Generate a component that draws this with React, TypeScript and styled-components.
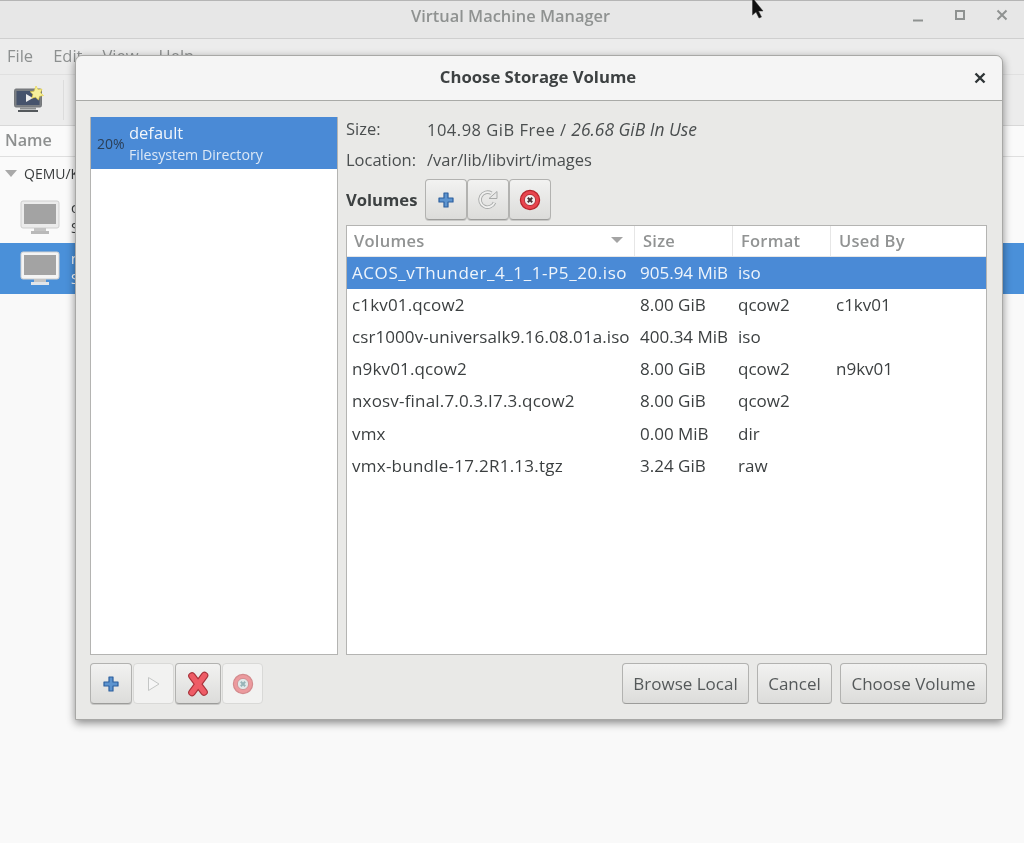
import React from "react";
import styled, { createGlobalStyle } from "styled-components";

const Global = createGlobalStyle`
  html, body { margin: 0; padding: 0; background: #f9f9f9; }
  body { font-family: "Open Sans", "Noto Sans", sans-serif; font-size: 16.5px; color: #2e3436; }
  * { box-sizing: border-box; }
`;

const Page = styled.div`
  position: relative;
  width: 1024px;
  height: 843px;
  overflow: hidden;
  background: #f9f9f9;
  filter: blur(0.55px);
`;

const TitleBar = styled.div`
  height: 39px;
  position: relative;
  display: flex;
  align-items: center;
  justify-content: center;
  padding: 0 3px 9px 0;
  background: #e7e7e7;
  border-top: 1px solid #b5b5b5;
  border-bottom: 1px solid #cfcfcf;
  color: #8f9291;
  font-weight: 600;
  font-size: 16.4px;
`;

const WindowControls = styled.div`
  position: absolute;
  right: 15px;
  top: 7px;
  display: flex;
  gap: 28px;
  align-items: center;
`;

const MenuBar = styled.div`
  height: 35px;
  display: flex;
  align-items: center;
  gap: 20px;
  padding: 0 7px 2px;
  background: #ececec;
  color: #8d9090;
  font-size: 16.5px;
`;

const ToolBar = styled.div`
  height: 51px;
  display: flex;
  align-items: center;
  padding-left: 13px;
  gap: 18px;
  background: #ececec;
  border-top: 1px solid #e0e0e0;
`;

const ToolSep = styled.div`
  width: 1px;
  height: 40px;
  background: #dcdcdc;
`;

const ListHeader = styled.div`
  height: 32px;
  display: flex;
  align-items: center;
  padding: 0 0 3px 5px;
  background: #fafafa;
  border-top: 1px solid #d8d8d8;
  border-bottom: 1px solid #dfdfdf;
  color: #8d8f8f;
  font-weight: 600;
  font-size: 16.2px;
`;

const GroupRow = styled.div`
  height: 35px;
  display: flex;
  align-items: center;
  gap: 7px;
  padding: 0 0 2px 5px;
  background: #fafafa;
  color: #3a3d3e;
  font-size: 14px;
`;

const Tri = styled.div`
  width: 0;
  height: 0;
  border-left: 6px solid transparent;
  border-right: 6px solid transparent;
  border-top: 7px solid #a9a9a9;
`;

const VmRow = styled.div<{ $selected?: boolean }>`
  height: 51px;
  display: flex;
  align-items: center;
  padding-left: 20px;
  gap: 11px;
  background: ${(p) => (p.$selected ? "#4a90d9" : "#fafafa")};
  color: ${(p) => (p.$selected ? "#fff" : "#3a3d3e")};
`;

const VmText = styled.div`
  display: flex;
  flex-direction: column;
  font-size: 14px;
  line-height: 20px;
`;

const Dialog = styled.div`
  position: absolute;
  left: 75px;
  top: 55px;
  width: 928px;
  height: 665px;
  display: flex;
  flex-direction: column;
  background: #e9e9e7;
  border: 1px solid #a8a8a6;
  border-radius: 7px 7px 0 0;
  box-shadow: 0 3px 9px rgba(0, 0, 0, 0.45);
`;

const DialogHead = styled.div`
  height: 45px;
  flex: none;
  position: relative;
  display: flex;
  align-items: center;
  justify-content: center;
  background: #f5f5f5;
  border-bottom: 1px solid #a9aaa7;
  border-radius: 7px 7px 0 0;
  font-weight: 700;
  font-size: 16.7px;
  color: #3d4142;
  padding: 0 2px 3px 0;
`;

const CloseBtn = styled.div`
  position: absolute;
  right: 16px;
  top: 16px;
  line-height: 0;
`;

const DialogBody = styled.div`
  flex: 1;
  display: flex;
  flex-direction: column;
  padding: 16px 15px 15px 14px;
  gap: 8px;
  min-height: 0;
`;

const Split = styled.div`
  flex: 1;
  display: flex;
  gap: 8px;
  min-height: 0;
`;

const PoolList = styled.div`
  width: 248px;
  flex: none;
  background: #fff;
  border: 1px solid #b4b4b2;
`;

const PoolRow = styled.div`
  height: 52px;
  margin: -1px 0 0;
  position: relative;
  background: #4a8ad6;
  display: flex;
  flex-direction: column;
  padding: 5px 0 0 38px;
  color: #f2f6fb;
`;

const PoolPct = styled.span`
  position: absolute;
  left: 6px;
  top: 17px;
  font-size: 14px;
  color: #2b3f57;
`;

const PoolName = styled.span`
  font-size: 16.5px;
  line-height: 22px;
`;

const PoolType = styled.span`
  font-size: 14.2px;
  line-height: 20px;
  color: #dce8f6;
  padding-top: 1px;
`;

const Right = styled.div`
  flex: 1;
  min-width: 0;
  display: flex;
  flex-direction: column;
`;

const InfoList = styled.div`
  margin-top: -4px;
`;

const InfoRow = styled.div`
  height: 31px;
  display: flex;
  align-items: center;
  color: #4a4e4f;
  font-size: 16.5px;
`;

const InfoLabel = styled.span<{ $w: number }>`
  width: ${(p) => p.$w}px;
  flex: none;
`;

const FreeText = styled.span`
  letter-spacing: 0.5px;
`;

const InUse = styled.em`
  font-size: 17.4px;
  letter-spacing: 0;
`;

const VolumesBar = styled.div`
  display: flex;
  align-items: center;
  height: 41px;
  margin-top: 4px;
`;

const VolumesLabel = styled.span`
  font-weight: 700;
  color: #3d4142;
  font-size: 16.6px;
  width: 79px;
`;

const IconBtn = styled.div<{ $disabled?: boolean; $w?: number }>`
  width: ${(p) => p.$w ?? 42}px;
  height: 41px;
  flex: none;
  display: flex;
  align-items: center;
  justify-content: center;
  border-radius: 4px;
  border: 1px solid ${(p) => (p.$disabled ? "#d9d9d7" : "#b2b2b0")};
  border-bottom-color: ${(p) => (p.$disabled ? "#d9d9d7" : "#9c9c9a")};
  background: ${(p) =>
    p.$disabled ? "#f2f2f1" : "linear-gradient(#f2f2f1, #dcdcda)"};
  box-shadow: ${(p) => (p.$disabled ? "none" : "0 1px 0 #c8c8c6")};
`;

const Table = styled.div`
  margin-top: 5px;
  flex: 1;
  min-height: 0;
  background: #fff;
  border: 1px solid #b4b4b2;
  display: flex;
  flex-direction: column;
`;

const Grid = styled.div`
  display: grid;
  grid-template-columns: 288px 98px 98px 1fr;
`;

const Head = styled(Grid)`
  height: 31px;
`;

const HeadCell = styled.div<{ $last?: boolean; $first?: boolean }>`
  display: flex;
  align-items: center;
  justify-content: space-between;
  padding: 0 11px 2px ${(p) => (p.$first ? 7 : 8)}px;
  color: #919393;
  font-weight: 600;
  font-size: 16.5px;
  letter-spacing: 0.25px;
  border-right: ${(p) => (p.$last ? "none" : "1px solid #e6e6e6")};
  border-bottom: 1px solid #e6e6e6;
`;

const HeadTri = styled.span`
  width: 0;
  height: 0;
  border-left: 6px solid transparent;
  border-right: 6px solid transparent;
  border-top: 6px solid #a4a4a4;
`;

const Row = styled(Grid)<{ $selected?: boolean }>`
  height: 32.2px;
  align-items: center;
  background: ${(p) => (p.$selected ? "#4a8ad6" : "#fff")};
  color: ${(p) => (p.$selected ? "#eef4fb" : "#3b3f40")};
  font-size: 17px;
`;

const Cell = styled.div`
  padding: 0 0 2px 5px;
  white-space: nowrap;
`;

const NameCell = styled(Cell)<{ $spread: number }>`
  letter-spacing: ${(p) => p.$spread}px;
`;

const Bottom = styled.div`
  height: 41px;
  flex: none;
  display: flex;
  align-items: center;
  justify-content: space-between;
`;

const BtnGroup = styled.div`
  display: flex;
  gap: 1px;
`;

const Actions = styled.div`
  display: flex;
  gap: 8px;
`;

const TextBtn = styled.div<{ $w: number }>`
  width: ${(p) => p.$w}px;
  height: 41px;
  display: flex;
  align-items: center;
  justify-content: center;
  border-radius: 4px;
  border: 1px solid #b2b2b0;
  border-bottom-color: #9c9c9a;
  background: linear-gradient(#f2f2f1, #dcdcda);
  color: #55595a;
  font-size: 17px;
  padding-bottom: 1px;
`;

const Plus = () => (
  <svg width="16" height="16" viewBox="0 0 16 16">
    <path d="M6 1h4v5h5v4h-5v5H6v-5H1V6h5z" fill="#5d94cf" stroke="#2c5f9e" strokeWidth="1.2" strokeLinejoin="round" />
  </svg>
);

const Refresh = () => (
  <svg width="22" height="22" viewBox="0 0 22 22" fill="none">
    <path d="M17.5 13.500A7.500 7.500 0 1 1 14.500 4.300" stroke="#a9abaa" strokeWidth="3.600" />
    <path d="M17.5 13.500A7.500 7.500 0 1 1 14.500 4.300" stroke="#f0f0ef" strokeWidth="1.800" />
    <path d="M12 9.500h8V2.500z" fill="#e8e8e7" stroke="#a9abaa" strokeWidth="1" strokeLinejoin="round" />
  </svg>
);

const StopIcon = ({ faded }: { faded?: boolean }) => (
  <svg width="22" height="22" viewBox="0 0 22 22" opacity={faded ? 0.5 : 1}>
    <circle cx="11" cy="11" r="9.600" fill="#e8454e" stroke="#b5252b" strokeWidth="1.200" />
    <circle cx="11" cy="11" r="5.600" fill={faded ? "#cfe0e2" : "#f0f0f0"} stroke="#a52026" strokeWidth="0.800" />
    <path d="M8.800 8.800l4.400 4.400M13.200 8.800l-4.400 4.400" stroke={faded ? "#3f7780" : "#4b3335"} strokeWidth="2" />
  </svg>
);

const PlayIcon = () => (
  <svg width="16" height="18" viewBox="0 0 16 18" fill="none">
    <path d="M2.500 2.500L13 9 2.500 15.500z" fill="#f6f6f6" stroke="#c4c6c5" strokeWidth="1" strokeLinejoin="round" />
  </svg>
);

const DeleteIcon = () => (
  <svg width="24" height="26" viewBox="0 0 24 26" fill="none" strokeLinecap="round">
    <path d="M6 5l12 16M18.500 4.500L6 21.500" stroke="#a8323a" strokeWidth="7.600" />
    <path d="M6 5l12 16M18.500 4.500L6 21.500" stroke="#ee5c66" strokeWidth="5.400" />
  </svg>
);

const Monitor = ({ selected }: { selected?: boolean }) => (
  <svg width="40" height="36" viewBox="0 0 40 36">
    <rect x="1" y="1" width="38" height="27" rx="2" fill={selected ? "#f4f4f4" : "#ececec"} stroke="#cfcfcf" />
    <rect x="4" y="4" width="32" height="20" fill="#a3a3a3" />
    <rect x="14" y="28" width="12" height="3" fill="#c4c4c4" />
    <rect x="11" y="31" width="18" height="3" fill={selected ? "#e0e5ea" : "#b9b9b9"} />
  </svg>
);

const NewVm = () => (
  <svg width="32" height="28" viewBox="0 0 32 28">
    <rect x="1.500" y="3" width="27" height="18" rx="1.500" fill="#7b7f83" stroke="#74777a" />
    <rect x="3.500" y="5" width="23" height="14" fill="#46536c" />
    <path d="M13 8l7 4-7 4z" fill="#eee" />
    <rect x="7" y="21.500" width="16" height="2" fill="#8c8f91" />
    <rect x="5" y="24" width="20" height="2" fill="#54585c" />
    <path d="M23 0l2 3.500 4-.5-1.500 3.800 3 2.700-4 .7-1 3.800-3-2.800-3.800 1 1.300-3.800-2.800-2.700 3.900-.5z" fill="#f6f09c" stroke="#e7d23d" strokeWidth=".6" />
  </svg>
);

const Cursor = styled.svg`
  position: absolute;
  left: 751px;
  top: 0;
`;

const rows: [string, string, string, string, number][] = [
  ["ACOS_vThunder_4_1_1-P5_20.iso", "905.94 MiB", "iso", "", 0.58],
  ["c1kv01.qcow2", "8.00 GiB", "qcow2", "c1kv01", 0.15],
  ["csr1000v-universalk9.16.08.01a.iso", "400.34 MiB", "iso", "", 0.08],
  ["n9kv01.qcow2", "8.00 GiB", "qcow2", "n9kv01", 0.15],
  ["nxosv-final.7.0.3.I7.3.qcow2", "8.00 GiB", "qcow2", "", 0.18],
  ["vmx", "0.00 MiB", "dir", "", 0.15],
  ["vmx-bundle-17.2R1.13.tgz", "3.24 GiB", "raw", "", 0.25],
];

export default function App() {
  return (
    <Page>
      <Global />
      <TitleBar>
        Virtual Machine Manager
        <WindowControls>
          <svg width="14" height="14" viewBox="0 0 14 14"><path d="M2 12.500h10" stroke="#8f9291" strokeWidth="2" /></svg>
          <svg width="14" height="14" viewBox="0 0 14 14" fill="none"><rect x="3" y="3" width="8" height="8" stroke="#8f9291" strokeWidth="2" /></svg>
          <svg width="14" height="14" viewBox="0 0 14 14"><path d="M2.500 2.500l9 9M11.500 2.500l-9 9" stroke="#8f9291" strokeWidth="2" /></svg>
        </WindowControls>
      </TitleBar>
      <MenuBar>
        <span>File</span>
        <span>Edit</span>
        <span>View</span>
        <span>Help</span>
      </MenuBar>
      <ToolBar>
        <NewVm />
        <ToolSep />
      </ToolBar>
      <ListHeader>Name</ListHeader>
      <GroupRow>
        <Tri />
        QEMU/KVM
      </GroupRow>
      <VmRow>
        <Monitor />
        <VmText><span>c1kv01</span><span>Shutoff</span></VmText>
      </VmRow>
      <VmRow $selected>
        <Monitor selected />
        <VmText><span>n9kv01</span><span>Shutoff</span></VmText>
      </VmRow>

      <Dialog>
        <DialogHead>
          Choose Storage Volume
          <CloseBtn>
            <svg width="12" height="12" viewBox="0 0 12 12"><path d="M1.500 1.500l9 9M10.500 1.500l-9 9" stroke="#2e3436" strokeWidth="2.400" /></svg>
          </CloseBtn>
        </DialogHead>
        <DialogBody>
          <Split>
            <PoolList>
              <PoolRow>
                <PoolPct>20%</PoolPct>
                <PoolName>default</PoolName>
                <PoolType>Filesystem Directory</PoolType>
              </PoolRow>
            </PoolList>
            <Right>
              <InfoList>
                <InfoRow>
                  <InfoLabel $w={81}>Size:</InfoLabel>
                  <FreeText>104.98 GiB Free / <InUse>26.68 GiB In Use</InUse></FreeText>
                </InfoRow>
                <InfoRow>
                  <InfoLabel $w={81}>Location:</InfoLabel>
                  <span>/var/lib/libvirt/images</span>
                </InfoRow>
              </InfoList>
              <VolumesBar>
                <VolumesLabel>Volumes</VolumesLabel>
                <IconBtn><Plus /></IconBtn>
                <IconBtn><Refresh /></IconBtn>
                <IconBtn><StopIcon /></IconBtn>
              </VolumesBar>
              <Table>
                <Head>
                  <HeadCell $first>Volumes<HeadTri /></HeadCell>
                  <HeadCell>Size</HeadCell>
                  <HeadCell>Format</HeadCell>
                  <HeadCell $last>Used By</HeadCell>
                </Head>
                {rows.map((r, i) => (
                  <Row key={r[0]} $selected={i === 0}>
                    <NameCell $spread={r[4]}>{r[0]}</NameCell>
                    <Cell>{r[1]}</Cell>
                    <Cell>{r[2]}</Cell>
                    <Cell>{r[3]}</Cell>
                  </Row>
                ))}
              </Table>
            </Right>
          </Split>
          <Bottom>
            <BtnGroup>
              <IconBtn><Plus /></IconBtn>
              <IconBtn $disabled $w={41}><PlayIcon /></IconBtn>
              <IconBtn $w={46}><DeleteIcon /></IconBtn>
              <IconBtn $disabled $w={41}><StopIcon faded /></IconBtn>
            </BtnGroup>
            <Actions>
              <TextBtn $w={127}>Browse Local</TextBtn>
              <TextBtn $w={75}>Cancel</TextBtn>
              <TextBtn $w={147}>Choose Volume</TextBtn>
            </Actions>
          </Bottom>
        </DialogBody>
      </Dialog>

      <Cursor width="14" height="22" viewBox="0 0 14 22">
        <path d="M1.500 -2L1.500 15l3.500-3 3 6 2.500-1-3-6h4.500z" fill="#111" stroke="#333" strokeWidth=".5" />
      </Cursor>
    </Page>
  );
}
